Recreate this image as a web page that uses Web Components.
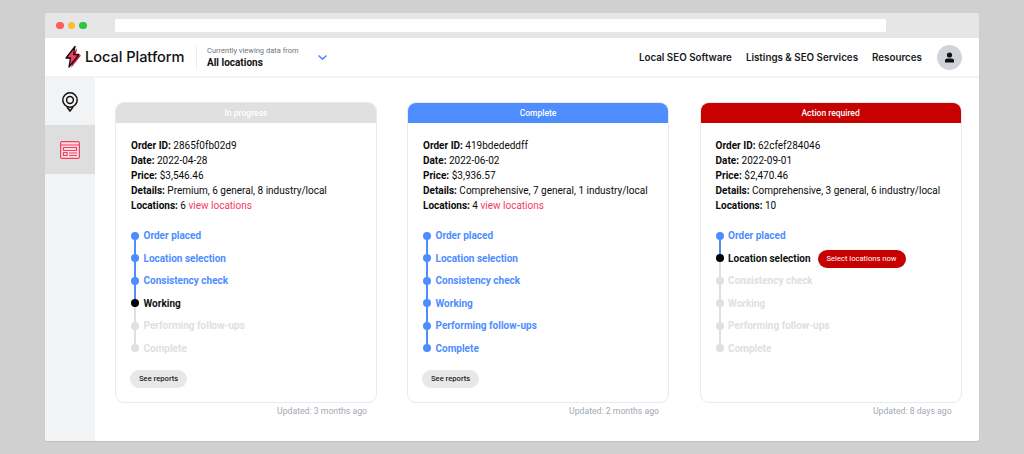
<!DOCTYPE html>
<html><head><meta charset="utf-8">
<style>
html,body{margin:0;padding:0;background:#d0d0d0;height:454px;overflow:hidden}
body{font-family:Roboto,"Liberation Sans",sans-serif;color:#111}
</style></head>
<body>
<app-window>
  <app-header slot="head"></app-header>
  <app-sidebar slot="side"></app-sidebar>
  <order-card status="progress" title-text="In progress" oid="2865f0fb02d9" date="2022-04-28" price="$3,546.46" details="Premium, 6 general, 8 industry/local" locations="6" link="1" done="3" reports="1" updated="Updated: 3 months ago"></order-card>
  <order-card status="complete" title-text="Complete" oid="419bdededdff" date="2022-06-02" price="$3,936.57" details="Comprehensive, 7 general, 1 industry/local" locations="4" link="1" done="6" reports="1" updated="Updated: 2 months ago"></order-card>
  <order-card status="action" title-text="Action required" oid="62cfef284046" date="2022-09-01" price="$2,470.46" details="Comprehensive, 3 general, 6 industry/local" locations="10" done="1" action="1" updated="Updated: 8 days ago"></order-card>
</app-window>
<script>
customElements.define('app-window',class extends HTMLElement{constructor(){super();this.attachShadow({mode:'open'}).innerHTML=`
<style>
:host{display:block;margin:13px 45px 0;width:934px;height:428px;background:#fff;border-radius:3px;overflow:hidden;box-shadow:0 1px 1px rgba(0,0,0,.08)}
.bar{height:25px;background:#e6e6e6;display:flex;align-items:center;box-sizing:border-box;padding-left:11px}
.dot{width:7.500px;height:7.500px;border-radius:50%;margin-right:4px}
.url{margin-left:24px;width:771px;height:13px;background:#fff}
.main{display:flex;height:363px}
.side{width:50px;flex:none}
.cards{display:flex;gap:30px;padding:24px 0 0 20px;align-items:flex-start}
</style>
<div class="bar"><span class="dot" style="background:#fc5f57"></span><span class="dot" style="background:#fdbb2f"></span><span class="dot" style="background:#28c740"></span><div class="url"></div></div>
<slot name="head"></slot>
<div class="main"><div class="side"><slot name="side"></slot></div><div class="cards"><slot></slot></div></div>`}});

customElements.define('app-header',class extends HTMLElement{constructor(){super();this.attachShadow({mode:'open'}).innerHTML=`
<style>
:host{display:flex;align-items:center;height:38px;border-bottom:2px solid #f3f3f3;font-family:Inter,"Liberation Sans",sans-serif;color:#111;background:#fff}
.logo{margin-left:19px;display:flex;align-items:center;width:21px}
.name{font-size:14.600px;font-weight:500;width:111px;white-space:nowrap;letter-spacing:-.05px}
.sep{width:1px;height:25px;background:#eee;margin:0 10px 0 0}
.view{width:110px;padding-top:1px}
.view small{display:block;font:400 7.500px/11px Roboto,sans-serif;color:#6f7680;margin-top:-1px}
.view b{display:block;font:700 10px/14px Roboto,sans-serif;color:#111}
.chev{width:11px;margin-top:-4px}
nav{margin-left:auto;display:flex;align-items:center;font-size:9.800px;font-weight:600;white-space:nowrap;color:#1a1a1a}
nav span{margin-right:14px}
nav span:last-of-type{margin-right:15px}
.av{width:25px;height:25px;border-radius:50%;background:#d0d3da;margin-right:17px;display:flex;align-items:center;justify-content:center}
</style>
<div class="logo"><svg width="18" height="24" viewBox="0 0 18 24"><path d="M12 2.500 3 13h4.500L6 22l10-12.500h-5.500z" fill="#e0183f" transform="translate(1.200 .8)"/><path d="M11 1.500 2 13h4.500L5 22l10-12.500H9.500z" fill="#f2405f" stroke="#111" stroke-width="1.300" stroke-linejoin="round"/></svg></div>
<div class="name">Local Platform</div><div class="sep"></div>
<div class="view"><small>Currently viewing data from</small><b>All locations</b></div>
<div class="chev"><svg width="11" height="7" viewBox="0 0 11 7"><path d="M1.500 1.500 5.500 5.200 9.500 1.500" fill="none" stroke="#4d8dff" stroke-width="1.600"/></svg></div>
<nav><span>Local SEO Software</span><span>Listings &amp; SEO Services</span><span>Resources</span><div class="av"><svg width="11" height="11" viewBox="0 0 11 11"><circle cx="5.500" cy="3" r="2.600" fill="#111"/><path d="M1 10.500V8.600C1 7.200 2.200 6.400 3.500 6.400h4c1.300 0 2.500.8 2.500 2.200v1.900z" fill="#111"/></svg></div></nav>`}});

customElements.define('app-sidebar',class extends HTMLElement{constructor(){super();this.attachShadow({mode:'open'}).innerHTML=`
<style>
:host{display:block;height:100%;background:#f2f3f5}
.i{height:47px;display:flex;align-items:center;justify-content:center}
.a{height:49px;background:#dedede}
</style>
<div class="i"><svg width="18" height="22" viewBox="0 0 18 22" fill="none" stroke="#111"><circle cx="9" cy="9" r="7.200" stroke-width="1.500"/><circle cx="9" cy="9" r="3.400" stroke-width="1.500"/><path d="M6 16 9 20 12 16" stroke-width="1.500"/></svg></div>
<div class="i a"><svg width="20" height="18" viewBox="0 0 20 18" fill="#f7dfe4" stroke="#f2405f" stroke-width="1.200"><rect x=".6" y=".6" width="18.800" height="16.800" rx="1.500"/><path d="M.6 4h18.800M3.500 6.500h13v3h-13zM3.500 11.500h3.500v3h-3.500zM9 12h8M9 14.500h8"/></svg></div>`}});

customElements.define('order-card',class extends HTMLElement{constructor(){super();const g=n=>this.getAttribute(n)||'';
const colors={progress:'#e0e0e0',complete:'#4d8dff',action:'#c70000'};
const steps=['Order placed','Location selection','Consistency check','Working','Performing follow-ups','Complete'];
const done=+g('done');
const rows=steps.map((s,i)=>{const st=i<done?'d':i==done?'c':'t';
const line=i<5?`<i class="l ${i<done?'ld':''}"></i>`:'';
const btn=(g('action')&&i==1)?'<span class="cta">Select locations now</span>':'';
return `<div class="s ${st}"><em></em>${line}<span class="lb">${s}</span>${btn}</div>`}).join('');
this.attachShadow({mode:'open'}).innerHTML=`
<style>
:host{display:block;width:262px;flex:none}
:host([status=action]){margin-left:.6px}
.card{height:301px;box-sizing:border-box;border:1px solid #e9e9e9;border-radius:9px;overflow:hidden;background:#fff}
.h{height:21px;margin:-1px -1px 0;background:${colors[g('status')]};color:#fff;font:500 8.500px/22px Roboto,sans-serif;text-align:center}
.b{padding:15px 15px 0}
.m{font:400 10px/15px Roboto,sans-serif;color:#0a0a0a;white-space:nowrap}
.m b{font-weight:700}
.m a{color:#f2405f}
.steps{margin-top:11.800px}
.s{height:22.500px;display:flex;align-items:center;position:relative;padding-left:12.500px;font:700 10px/22px Roboto,sans-serif;white-space:nowrap}
.s em{position:absolute;left:0;top:7px;width:8px;height:8px;border-radius:50%;z-index:1}
.l{position:absolute;left:3px;top:11px;width:2px;height:22.500px;background:#e0e0e0}
.ld{background:#4d8dff}
.d{color:#4d8dff}.d em{background:#4d8dff}
.c{color:#111}.c em{background:#000}
.t{color:#e0e0e0}.t em{background:#e0e0e0}
.cta{margin-left:7px;height:18px;border-radius:9px;background:#c70000;color:#fff;font:400 7.600px/18px Roboto,sans-serif;padding:0 9px;position:relative;top:.5px}
.rep{display:inline-block;margin:10.200px 0 0 -1px;height:18px;border-radius:9px;background:#e8e8e8;color:#222;font:500 7.600px/18px Roboto,sans-serif;padding:0 9px}
.u{font:400 8.700px/11px Roboto,sans-serif;color:#a3a9b4;text-align:right;padding-right:10px;margin-top:2.500px}
</style>
<div class="card"><div class="h">${g('title-text')}</div><div class="b">
<div class="m"><b>Order ID:</b> ${g('oid')}</div><div class="m"><b>Date:</b> ${g('date')}</div><div class="m"><b>Price:</b> ${g('price')}</div><div class="m"><b>Details:</b> ${g('details')}</div><div class="m"><b>Locations:</b> ${g('locations')}${g('link')?' <a>view locations</a>':''}</div>
<div class="steps">${rows}</div>${g('reports')?'<span class="rep">See reports</span>':''}</div></div>
<div class="u">${g('updated')}</div>`}});
</script>
</body></html>
